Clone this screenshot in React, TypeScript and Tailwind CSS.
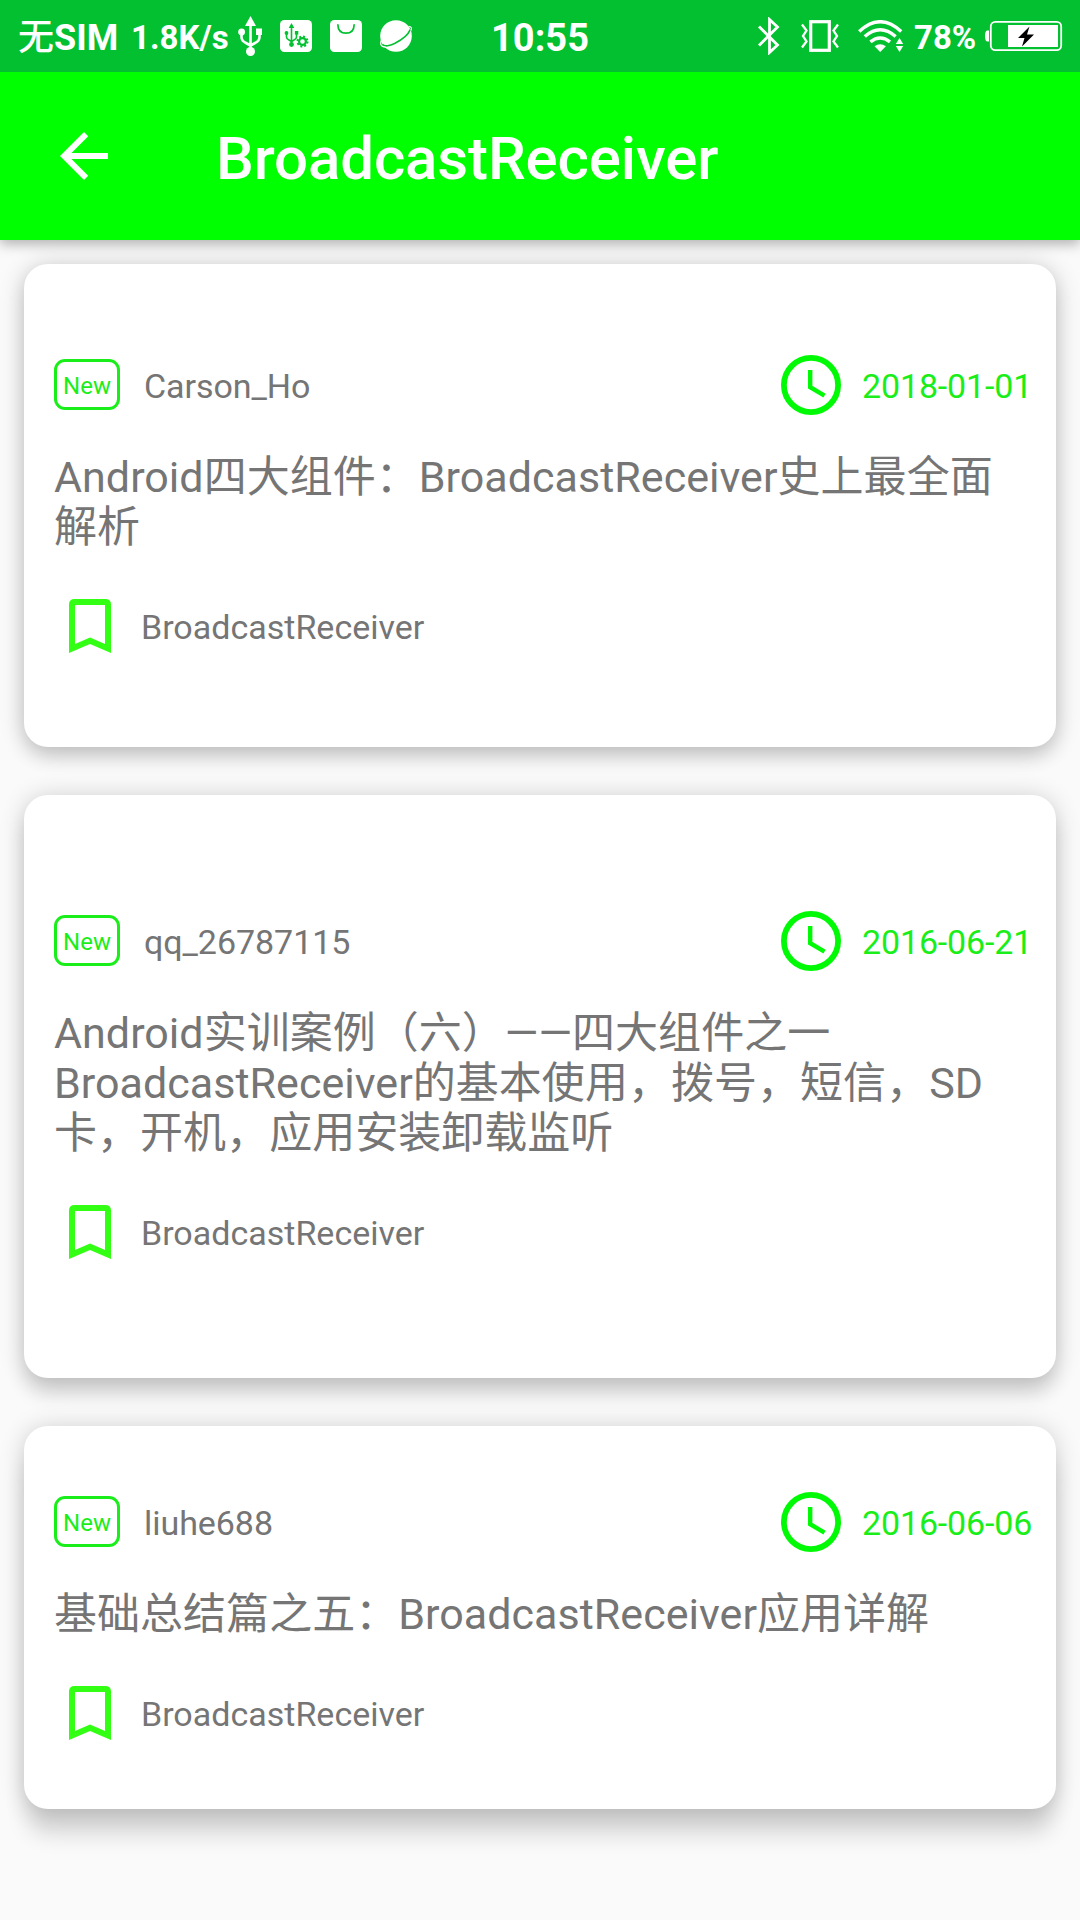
import React from "react";

type Post = {
  author: string;
  date: string;
  lines: string[];
  cardClass: string;
};

const posts: Post[] = [
  {
    author: "Carson_Ho",
    date: "2018-01-01",
    lines: ["Android四大组件：BroadcastReceiver史上最全面", "解析"],
    cardClass: "h-[483px] shadow-[0_12px_20px_-2px_rgba(0,0,0,0.12),0_2px_24px_rgba(0,0,0,0.2)]",
  },
  {
    author: "qq_26787115",
    date: "2016-06-21",
    lines: [
      "Android实训案例（六）——四大组件之一",
      "BroadcastReceiver的基本使用，拨号，短信，SD",
      "卡，开机，应用安装卸载监听",
    ],
    cardClass: "h-[583px] shadow-[0_18px_20px_-2px_rgba(0,0,0,0.13),0_2px_24px_rgba(0,0,0,0.19)]",
  },
  {
    author: "liuhe688",
    date: "2016-06-06",
    lines: ["基础总结篇之五：BroadcastReceiver应用详解"],
    cardClass: "h-[383px] shadow-[0_28px_22px_-3px_rgba(0,0,0,0.14),0_2px_24px_rgba(0,0,0,0.19)]",
  },
];

function UsbIcon() {
  return (
    <svg className="block h-10 w-6 shrink-0" viewBox="0 0 24 40" fill="none">
      <path d="M12.5 0 18 10H7Z" fill="white" />
      <path d="M12.5 8V34M3.5 17V21Q3.5 25 8 27L12.5 29.5M21.5 17V21Q21.5 25 17 27L12.5 29.5" stroke="white" strokeWidth="2.6" />
      <circle cx="3.6" cy="16" r="3.4" fill="white" />
      <rect x="18" y="12.5" width="6" height="6.5" fill="white" />
      <circle cx="12.5" cy="35.5" r="4.5" fill="white" />
    </svg>
  );
}

function UsbSettingsIcon() {
  return (
    <svg className="block size-8 shrink-0" viewBox="0 0 32 32" fill="none">
      <rect width="32" height="32" rx="4.5" fill="white" />
      <g stroke="#03c030" strokeWidth="1.6">
        <path d="M11.5 7V25M6.5 14V17Q6.5 19 9 20L11.5 21.5M16.5 14V17Q16.5 19 14 20L11.5 21.5" />
        <circle cx="22.5" cy="21.5" r="3.4" strokeWidth="2.2" />
        <circle cx="22.5" cy="21.5" r="5" strokeWidth="2" strokeDasharray="1.96 1.96" />
      </g>
      <g fill="#03c030">
        <path d="M11.5 3 14.3 8H8.7Z" />
        <circle cx="6.5" cy="13" r="1.9" />
        <rect x="14.9" y="11" width="3.4" height="3.6" />
        <circle cx="11.5" cy="24.5" r="2.4" />
      </g>
    </svg>
  );
}

function BagIcon() {
  return (
    <svg className="block size-8 shrink-0" viewBox="0 0 32 32" fill="none">
      <rect width="32" height="32" rx="4.5" fill="white" />
      <path d="M7.8 4.2Q8 13.2 16 13.2T24.2 4.2" stroke="#03c030" strokeWidth="1.7" />
    </svg>
  );
}

function PlanetIcon() {
  return (
    <svg className="block size-8 shrink-0" viewBox="0 0 32 32" fill="none">
      <circle cx="16" cy="16" r="15.8" fill="white" />
      <path d="M2.5 24.5C4.5 27 10 25.5 15 23.2C22.5 19.5 28.5 14 30.3 9.5" stroke="#03c030" strokeWidth="1.7" />
      <path d="M1.2 20.5C-.5 25.5 2.5 27.4 6 27M28.5 6.3Q32.6 6.5 31 10.5" stroke="white" strokeWidth="1.2" />
    </svg>
  );
}

function BluetoothIcon() {
  return (
    <svg className="block h-[38px] w-[22px] shrink-0" viewBox="0 0 22 38" fill="none">
      <path d="M1 9.5 19.5 28 11.5 35.5V2.5L19.5 10 1 28.5" stroke="white" strokeWidth="2.8" />
    </svg>
  );
}

function VibrateIcon() {
  return (
    <svg className="block h-8 w-[38px] shrink-0" viewBox="0 0 38 32" fill="none" stroke="white">
      <rect x="9.7" y="1.7" width="18.6" height="28.6" strokeWidth="3.2" />
      <path d="M1 4.5 5.5 10.5 2 16 5.5 21.5 1 27.5M37 4.5 32.5 10.5 36 16 32.5 21.5 37 27.5" strokeWidth="2.3" />
    </svg>
  );
}

function WifiIcon() {
  return (
    <svg className="block h-8 w-[46px] shrink-0" viewBox="0 0 46 32" fill="none">
      <path d="M1.2 11.5Q22.2-8 43.2 11.5M6.8 16.5Q22.2 3 37.6 16.5M12.4 21.8Q22.2 14 32 21.8" stroke="white" strokeWidth="3.4" />
      <path d="M16.5 26.2Q22.2 22.5 27.9 26.2L22.2 32Z" fill="white" />
      <path d="M41.5 18 45.2 24H37.8ZM41.5 32 45.2 26H37.8Z" fill="white" />
    </svg>
  );
}

function BatteryIcon() {
  return (
    <svg className="block h-[30px] w-[78px] shrink-0" viewBox="0 0 78 30" fill="none">
      <path d="M4 9.5H2.5Q0 9.5 0 15T2.5 20.5H4Z" fill="white" />
      <rect x="5.8" y="0.9" width="70.4" height="28.2" rx="4.5" stroke="white" strokeWidth="1.8" />
      <rect x="23" y="4" width="50" height="22" fill="white" />
      <path d="M44.5 5.5 33 17H39.5L37 25.5 49 13.5H42Z" fill="black" />
    </svg>
  );
}

function ClockIcon() {
  return (
    <svg className="block size-[60px] shrink-0" viewBox="0 0 60 60" fill="none" stroke="#00fa05">
      <circle cx="30" cy="30" r="27.1" strokeWidth="5.8" />
      <path d="M29.2 15V32.2L43.5 40.6" strokeWidth="4.4" />
    </svg>
  );
}

function BookmarkIcon() {
  return (
    <svg className="block h-[54px] w-[42px] shrink-0" viewBox="0 0 42 54">
      <path
        fillRule="evenodd"
        d="M5.5 0H36.5Q42 0 42 5.5V54L21 45 0 54V5.5Q0 0 5.5 0ZM6 6V45L21 38.5 36 45V6Z"
        fill="#33ff14"
      />
    </svg>
  );
}

function StatusBar() {
  return (
    <div className="relative z-20 flex h-[72px] bg-[#03c030] font-bold text-white">
      <div className="flex h-full w-[479px] items-center pl-[18px]">
        <span className="w-[113px] whitespace-nowrap pt-[3px] text-[36px] leading-none">
          <span className="font-medium">无</span>SIM
        </span>
        <span className="w-[107px] whitespace-nowrap pt-[2px] text-[33px] leading-none">1.8K/s</span>
        <UsbIcon />
        <div className="ml-[18px] flex gap-[18px]">
          <UsbSettingsIcon />
          <BagIcon />
          <PlanetIcon />
        </div>
      </div>
      <div className="flex w-[122px] items-center justify-center pt-[3px] text-[38px] leading-none">10:55</div>
      <div className="flex flex-1 items-center justify-end pr-[17px]">
        <BluetoothIcon />
        <div className="ml-[21px]"><VibrateIcon /></div>
        <div className="ml-[19px]"><WifiIcon /></div>
        <span className="ml-[10px] w-[71px] whitespace-nowrap pt-[2px] text-[33px] leading-none">78%</span>
        <BatteryIcon />
      </div>
    </div>
  );
}

function PostCard({ post }: { post: Post }) {
  return (
    <article className={"flex flex-col justify-center rounded-[24px] bg-white pb-[3px] pl-[30px] pr-6 " + post.cardClass}>
      <div className="flex h-[60px] items-center">
        <div className="-mt-px flex h-[51px] w-[66px] items-center justify-center rounded-[11px] border-[3px] border-[#1aee1a] pt-[2px] text-[24px] leading-none text-[#1aee1a]">
          New
        </div>
        <span className="ml-6 pt-px text-[34px] leading-[40px] tracking-[-0.05px]">{post.author}</span>
        <div className="ml-auto flex items-center">
          <ClockIcon />
          <span className="ml-[21px] w-[170px] whitespace-nowrap pt-px text-[34px] leading-[40px] tracking-[-0.15px] text-[#1aee1a]">
            {post.date}
          </span>
        </div>
      </div>
      <h2 className="mt-[37px] text-[43px] leading-[50px] tracking-[0.03px]">
        {post.lines.map((line) => (
          <span key={line} className="block whitespace-nowrap">{line}</span>
        ))}
      </h2>
      <div className="mt-[47px] flex items-center pl-[15px]">
        <BookmarkIcon />
        <span className="ml-[30px] pt-px text-[34px] leading-[40px]">BroadcastReceiver</span>
      </div>
    </article>
  );
}

export default function App() {
  return (
    <div className="h-[1920px] w-[1080px] overflow-hidden bg-[#fafafa] font-['Roboto','Noto_Sans_CJK_SC',sans-serif] text-[#757575]">
      <StatusBar />
      <header className="relative z-10 flex h-[168px] items-center bg-[#00ff00] pl-[48px] text-white shadow-[0_4px_12px_rgba(0,0,0,0.3)]">
        <svg className="block size-[72px]" viewBox="0 0 24 24" fill="white">
          <path d="M20 11H7.83l5.59-5.59L12 4l-8 8 8 8 1.41-1.41L7.83 13H20v-2z" />
        </svg>
        <h1 className="ml-24 pt-[5px] text-[60px] font-medium leading-[70px] tracking-[-0.13px]">BroadcastReceiver</h1>
      </header>
      <main className="flex flex-col gap-12 px-6 pt-6">
        {posts.map((post) => (
          <PostCard key={post.author} post={post} />
        ))}
      </main>
    </div>
  );
}
